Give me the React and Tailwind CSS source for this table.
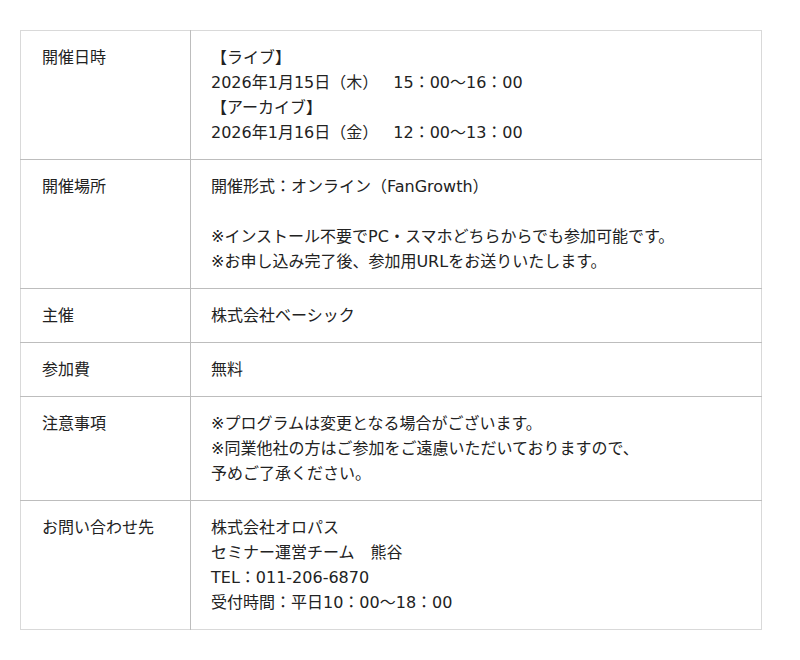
import React from "react";

const rows = [
  {
    label: "開催日時",
    lines: [
      "【ライブ】",
      ["2026年1月15日（木）　", "15：00〜16：00"],
      "【アーカイブ】",
      ["2026年1月16日（金）　", "12：00〜13：00"],
    ],
  },
  {
    label: "開催場所",
    lines: [
      "開催形式：オンライン（FanGrowth）",
      "",
      "※インストール不要でPC・スマホどちらからでも参加可能です。",
      "※お申し込み完了後、参加用URLをお送りいたします。",
    ],
  },
  { label: "主催", lines: ["株式会社ベーシック"] },
  { label: "参加費", lines: ["無料"] },
  {
    label: "注意事項",
    lines: [
      "※プログラムは変更となる場合がございます。",
      "※同業他社の方はご参加をご遠慮いただいておりますので、",
      "予めご了承ください。",
    ],
  },
  {
    label: "お問い合わせ先",
    lines: [
      "株式会社オロパス",
      "セミナー運営チーム　熊谷",
      "TEL：011-206-6870",
      "受付時間：平日10：00〜18：00",
    ],
  },
];

export default function App() {
  return (
    <div
      className="min-h-[660px] w-[800px] bg-white pt-[30px] pl-[20px] text-[#222] text-[16px] leading-[25px]"
      style={{ fontFamily: '"DejaVu Sans", "Noto Sans CJK JP", sans-serif' }}
    >
      <table className="w-[742px] border-collapse border border-[#d9d9d9]">
        <tbody>
          {rows.map((row) => (
            <tr key={row.label} className="border-t border-[#bdbdbd] first:border-t-[#d9d9d9]">
              <td className="w-[170px] align-top border-r border-[#bdbdbd] pl-[21px] pr-2 pt-[14px] pb-[14px]">
                {row.label}
              </td>
              <td className="align-top pl-[20px] pr-4 pt-[14px] pb-[14px]">
                {row.lines.map((line, i) => (
                  <div key={i} className="h-[25px] whitespace-nowrap">
                    {Array.isArray(line) ? (
                      <>
                        {line[0]}
                        <span className="ml-[7px]">{line[1]}</span>
                      </>
                    ) : (
                      line
                    )}
                  </div>
                ))}
              </td>
            </tr>
          ))}
        </tbody>
      </table>
    </div>
  );
}
